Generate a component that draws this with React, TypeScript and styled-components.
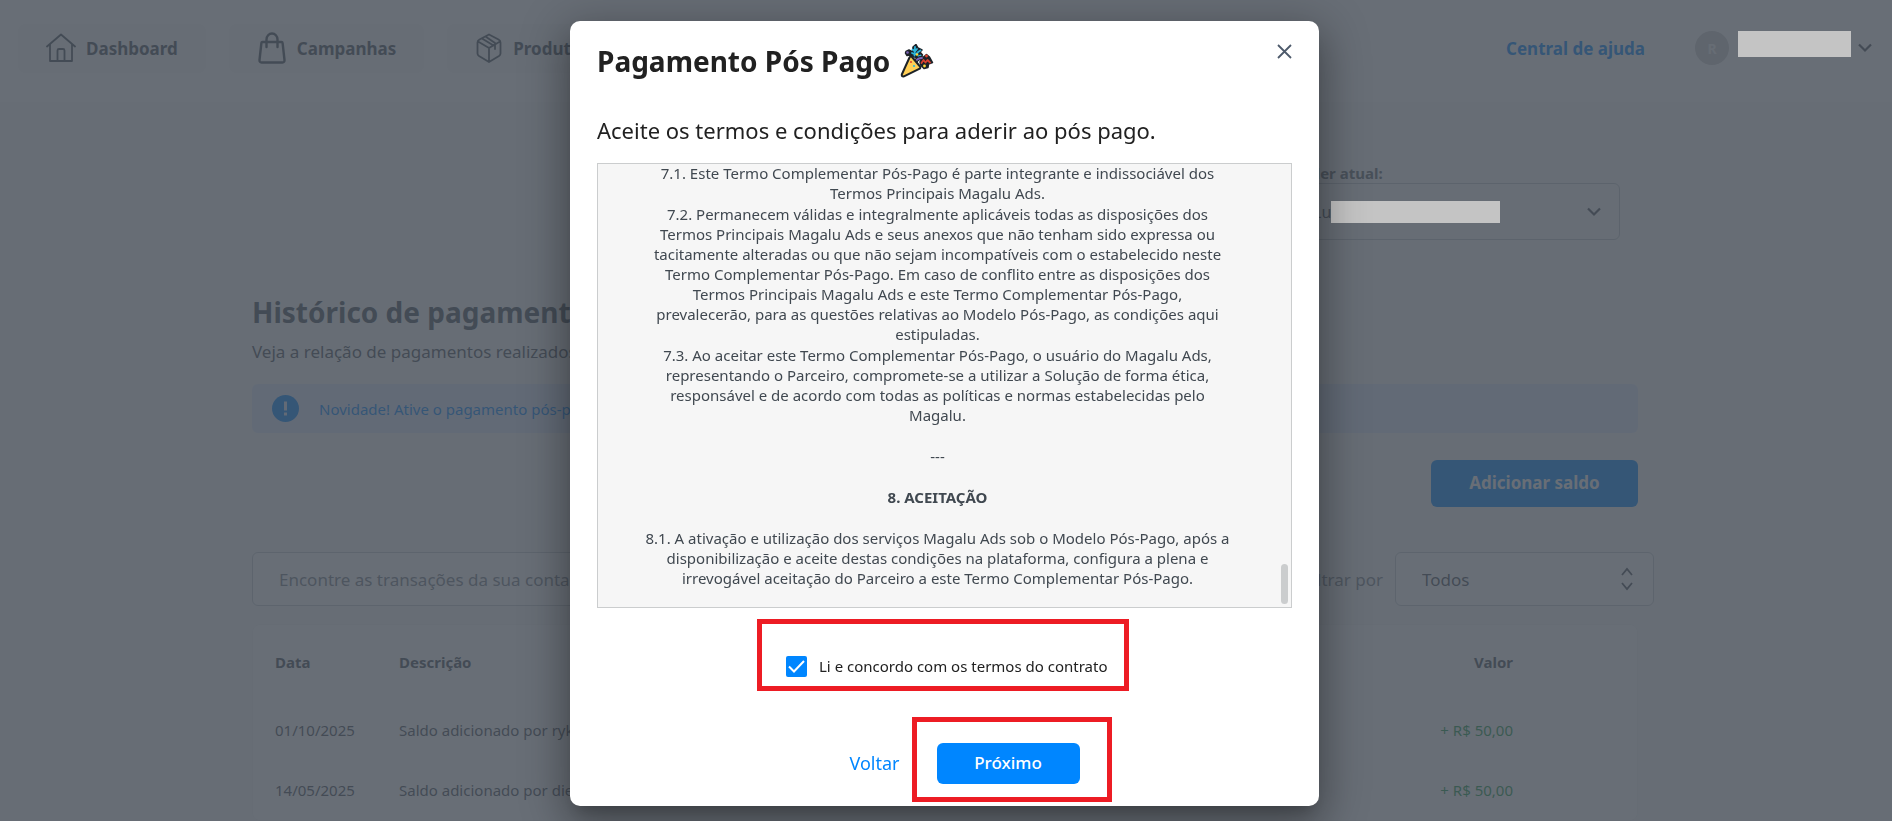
import React from "react";
import styled, { createGlobalStyle } from "styled-components";

const GlobalStyle = createGlobalStyle`
  *, *::before, *::after { box-sizing: border-box; }
  body {
    margin: 0;
    overflow: hidden;
    background: #f8fafa;
    color: #4a525c;
    font-family: "Noto Sans", "Open Sans", sans-serif;
    font-size: 16px;
  }
  button, input, select { font: inherit; color: inherit; }
  h1, h2, p { margin: 0; }
`;

/* ---------- page ---------- */

const Header = styled.header`
  display: flex;
  align-items: center;
  justify-content: space-between;
  height: 102px;
  padding: 0 20px 6px 18px;
  background: #ffffff;
`;

const Nav = styled.nav`
  display: flex;
  gap: 23px;
`;

const NavItem = styled.a`
  display: flex;
  align-items: center;
  gap: 10px;
  height: 49px;
  padding: 0 28px;
  border-radius: 8px;
  background: #f7f7f7;
  color: #49525b;
  font-size: 17px;
  font-weight: 700;
  text-decoration: none;
`;

const Account = styled.div`
  display: flex;
  align-items: center;
`;

const HelpLink = styled.a`
  margin-right: 50px;
  color: #0086ff;
  font-size: 17px;
  font-weight: 700;
  text-decoration: none;
`;

const Avatar = styled.span`
  display: flex;
  align-items: center;
  justify-content: center;
  width: 34px;
  height: 34px;
  margin-right: 9px;
  border-radius: 50%;
  background: #cfcfcf;
  color: #f8f8f8;
  font-size: 14px;
  font-weight: 700;
`;

const Redacted = styled.span<{ $width: number; $height: number }>`
  position: relative;
  z-index: 2;
  width: ${(p) => p.$width}px;
  height: ${(p) => p.$height}px;
  background: #c4c4c4;
`;

const AccountName = styled.span`
  display: flex;
  height: 34px;
  margin-right: 7px;
`;

const IconButton = styled.button`
  display: flex;
  padding: 0;
  border: 0;
  background: none;
`;

const Main = styled.main`
  padding: 61px 254px 0 252px;
`;

const SellerBlock = styled.div`
  display: flex;
  flex-direction: column;
  width: 420px;
  margin: 0 18px 0 auto;
`;

const SellerLabel = styled.span`
  padding-left: 94px;
  color: #606870;
  font-size: 15px;
  font-weight: 700;
  line-height: 20px;
`;

const SellerPicker = styled.button`
  display: flex;
  align-items: center;
  height: 57px;
  padding: 0 18px 0 112px;
  border: 1px solid #c4c8cc;
  border-radius: 6px;
  background: none;
  font-size: 16px;
  text-align: left;

  svg { margin-left: auto; }
`;

const PageTitle = styled.h1`
  margin-top: 56px;
  color: #49525b;
  font-size: 28px;
  font-weight: 700;
  line-height: 32px;
`;

const PageText = styled.p`
  margin-top: 12px;
  font-size: 17px;
  line-height: 24px;
`;

const Notice = styled.div`
  display: flex;
  align-items: center;
  gap: 20px;
  height: 49px;
  margin-top: 20px;
  padding: 0 20px;
  border-radius: 6px;
  background: #e2ebff;
  color: #0086ff;
  font-size: 15px;
`;

const PrimaryButton = styled.button<{ $large?: boolean }>`
  width: ${(p) => (p.$large ? 207 : 143)}px;
  height: ${(p) => (p.$large ? 47 : 41)}px;
  padding: 0 0 2px;
  border: 0;
  border-radius: 6px;
  background: #0086ff;
  color: #ffffff;
  font-size: 17px;
  font-weight: ${(p) => (p.$large ? 700 : 500)};
`;

const Actions = styled.div`
  display: flex;
  justify-content: flex-end;
  margin-top: 27px;
`;

const Filters = styled.div`
  display: flex;
  align-items: center;
  gap: 24px;
  margin: 45px -16px 0 0;
`;

const Search = styled.input`
  flex: 1;
  height: 54px;
  padding: 0 26px;
  border: 1px solid #c9cdd2;
  border-radius: 6px;
  background: #ffffff;
  font-size: 17px;

  &::placeholder { color: #7b828a; opacity: 1; }
`;

const FilterLabel = styled.label`
  display: flex;
  align-items: center;
  gap: 12px;
  color: #7b828a;
  font-size: 17px;
`;

const SelectBox = styled.span`
  display: grid;
  align-items: center;
  width: 259px;
  color: #4a525c;

  > * { grid-area: 1 / 1; }
  svg { justify-self: end; margin-right: 20px; pointer-events: none; }
`;

const Select = styled.select`
  appearance: none;
  width: 100%;
  height: 54px;
  padding: 0 26px;
  border: 1px solid #c9cdd2;
  border-radius: 6px;
  background: #ffffff;
`;

const Card = styled.section`
  margin-top: 18px;
  border: 1px solid #f6f6f6;
  border-radius: 8px;
  background: #ffffff;
`;

const Table = styled.table`
  width: 100%;
  border-collapse: collapse;
  font-size: 15px;
  text-align: left;
`;

const HeadCell = styled.th<{ $width?: number; $right?: boolean }>`
  height: 75px;
  width: ${(p) => (p.$width ? `${p.$width}px` : "auto")};
  padding: ${(p) => (p.$right ? "0 124px 2px 0" : "0 0 2px 22px")};
  color: #49525b;
  font-weight: 700;
  text-align: ${(p) => (p.$right ? "right" : "left")};
`;

const Cell = styled.td<{ $right?: boolean }>`
  height: 60px;
  padding: ${(p) => (p.$right ? "0 124px 0 0" : "0 0 0 22px")};
  color: ${(p) => (p.$right ? "#1c9a4c" : "inherit")};
  text-align: ${(p) => (p.$right ? "right" : "left")};
`;

/* ---------- dialog ---------- */

const Overlay = styled.div`
  position: fixed;
  inset: 0;
  z-index: 1;
  background: rgba(66, 74, 84, 0.8);
`;

const DialogLayer = styled.div`
  position: fixed;
  inset: 0;
  z-index: 3;
  display: flex;
  align-items: flex-start;
  justify-content: center;
  padding: 21px 3px 15px 0;
`;

const Dialog = styled.div`
  width: 100%;
  max-width: 749px;
  padding: 23px 27px 22px;
  border-radius: 10px;
  background: #ffffff;
  box-shadow:
    0 11px 15px -7px rgba(0, 0, 0, 0.2),
    0 24px 38px 3px rgba(0, 0, 0, 0.14),
    0 9px 46px 8px rgba(0, 0, 0, 0.24);
  color: #212121;
`;

const DialogHead = styled.div`
  display: flex;
  align-items: flex-start;
  justify-content: space-between;
`;

const DialogTitle = styled.h2`
  display: flex;
  align-items: center;
  gap: 10px;
  height: 34px;
  font-size: 28px;
  font-weight: 700;
  line-height: 34px;
`;

const DialogText = styled.p`
  margin-top: 38px;
  font-size: 22px;
  line-height: 28px;
`;

const Terms = styled.div`
  position: relative;
  height: 445px;
  margin-top: 19px;
  padding-right: 14px;
  border: 1px solid #cbcdce;
  background: #f6f6f6;
  color: #404850;
  font-size: 15px;
  line-height: 20px;
  text-align: center;
`;

const TermsBody = styled.div`
  margin-top: -1px;
`;

const Clause = styled.p`
  margin-bottom: 1px;
`;

const TermsBreak = styled.p`
  margin: 21px 0;
`;

const TermsTitle = styled(TermsBreak)`
  font-weight: 700;
`;

const ScrollThumb = styled.span`
  position: absolute;
  right: 3px;
  bottom: 3px;
  width: 7px;
  height: 40px;
  border-radius: 4px;
  background: #cbcdce;
`;

const Marked = styled.div<{ $inset: string }>`
  position: relative;
  display: flex;

  &::after {
    content: "";
    position: absolute;
    inset: ${(p) => p.$inset};
    border: 5px solid #ed1c24;
    pointer-events: none;
  }
`;

const Consent = styled.div`
  display: flex;
  justify-content: center;
  margin-top: 47px;
  padding-left: 11px;
`;

const ConsentLabel = styled.label`
  display: flex;
  align-items: center;
  gap: 12px;
  min-width: 328px;
  height: 22px;
  font-size: 15px;
  white-space: nowrap;
`;

const Tick = styled.span`
  display: grid;
  > * { grid-area: 1 / 1; }
  svg { pointer-events: none; }
`;

const Checkbox = styled.input`
  appearance: none;
  width: 21px;
  height: 21px;
  margin: 0;
  border-radius: 2px;
  background: #0086ff;
`;

const DialogActions = styled.div`
  display: flex;
  align-items: center;
  justify-content: center;
  gap: 37px;
  margin-top: 66px;
  padding-left: 40px;
`;

const BackButton = styled.button`
  padding: 0 0 2px;
  border: 0;
  background: none;
  color: #0086ff;
  font-size: 18px;
`;

/* ---------- drawings ---------- */

const stroke = {
  fill: "none",
  stroke: "currentColor",
  strokeLinecap: "round" as const,
  strokeLinejoin: "round" as const,
};

const HomeIcon = () => (
  <svg width="30" height="30" viewBox="0 0 30 30" {...stroke} strokeWidth="1.8">
    <path d="M1 13.5 15 1.5l14 12M4 11.500V28h22V11.500M11.500 28V17.500q0-1.500 1.500-1.500h4q1.500 0 1.500 1.500V28" />
  </svg>
);

const BagIcon = () => (
  <svg width="30" height="32" viewBox="-1 -1 30 32" {...stroke} strokeWidth="2.400">
    <path d="M4.500 9h19q1 0 1.100 1L26.500 27q.1 2.500-2 2.500h-21Q1.400 29.500 1.500 27L3.400 10q.1-1 1.100-1ZM8.500 14V6.500a5.500 6 0 0 1 11 0V14" />
  </svg>
);

const BoxIcon = () => (
  <svg width="28" height="30" viewBox="-1 -1 28 30" {...stroke} strokeWidth="1.800">
    <path d="M13 .5 22.500 5.500Q24.500 6.500 24.500 8.500v11q0 1.500-1.500 2.500L13 28 3 22Q1.500 21 1.500 19.500v-11q0-2 2-3ZM2 7.500 13 14l11-6.500M13 14v14M6 4.500l11.500 7M9.500 2.500 19 9v6" />
  </svg>
);

const Chevron = () => (
  <svg width="14" height="10" viewBox="0 0 14 10" {...stroke} strokeLinecap="butt" strokeLinejoin="miter" strokeWidth="2.200">
    <path d="m1 1.500 6 6 6-6" />
  </svg>
);

const Sorter = () => (
  <svg width="14" height="24" viewBox="0 0 14 24" {...stroke} strokeLinecap="butt" strokeLinejoin="miter" strokeWidth="1.800">
    <path d="m2 8 5-6 5 6M2 16l5 6 5-6" />
  </svg>
);

const AlertIcon = () => (
  <svg width="27" height="27" viewBox="0 0 27 27">
    <circle cx="13.500" cy="13.500" r="13.500" fill="#0086ff" />
    <path d="M12 6.500h3v9h-3zM12 17.500h3v3h-3z" fill="#e2ebff" />
  </svg>
);

const CloseIcon = () => (
  <svg width="15" height="15" viewBox="0 0 15 15" fill="none" stroke="#4d5a6b" strokeWidth="1.800">
    <path d="m1 1 13 13M14 1 1 14" />
  </svg>
);

const CheckMark = () => (
  <svg width="21" height="21" viewBox="0 0 21 21" fill="none" stroke="#fff" strokeWidth="2">
    <path d="m3 10.500 5 5L18 5" />
  </svg>
);

const PartyIcon = () => (
  <svg width="34" height="34" viewBox="0 0 34 34" strokeLinejoin="round" strokeLinecap="round">
    <path d="M6 7.500 9 6l3.500 2L13 3l3-2.500L18 4l4 2-2 2 2.500 3-3 3-5-1-4-2-3.500.5L5.500 9Z" fill="#1c2228" stroke="#1c2228" strokeWidth="1.500" />
    <path d="m20 18 2.500-4 4-3.500 3 2.500 3 5.500-4 1.500-.5 3.500-4 1-3-3Z" fill="#1c2228" stroke="#1c2228" strokeWidth="1.500" />
    <path d="M14.500 11.500 15 3M12.500 5.500l2.500 2 2-2.500M12 9l3 1.500 3-2M18 8l2.500-1.500M18.500 12l2-.5" fill="none" stroke="#2bb5dc" strokeWidth="1.800" />
    <path d="M15.500 17.500q2-3.500 6.500-3.500" fill="none" stroke="#1c2228" strokeWidth="4" />
    <path d="M15.500 17.500q2-3.500 6.500-3.500" fill="none" stroke="#7d63b8" strokeWidth="1.800" />
    <path d="m21.500 19 2-3 2 2.500 2-2.500 2.500 2.500" fill="none" stroke="#d8402f" strokeWidth="1.800" />
    <circle cx="7.500" cy="8.500" r="1.300" fill="#7d63b8" />
    <circle cx="17" cy="10.500" r="1.300" fill="#fcd93b" />
    <circle cx="26.500" cy="12" r="1.400" fill="#e2452f" />
    <circle cx="24.500" cy="22" r="1.400" fill="#fcd93b" />
    <path d="M9.500 13.500Q10.500 12 12 13l8 9.500q1 1.500-.8 2.300L4 32.300q-2.500.7-2.200-1.800Z" fill="#ffcf56" stroke="#1c2228" strokeWidth="2" />
    <circle cx="11" cy="18" r="1.100" fill="#e2452f" />
    <circle cx="14" cy="22" r="1.100" fill="#2bb5dc" />
  </svg>
);

/* ---------- content ---------- */

const transactions = [
  { date: "01/10/2025", text: "Saldo adicionado por ryk", value: "+ R$ 50,00" },
  { date: "14/05/2025", text: "Saldo adicionado por die", value: "+ R$ 50,00" },
];

const clauses = [
  [
    "7.1. Este Termo Complementar Pós-Pago é parte integrante e indissociável dos",
    "Termos Principais Magalu Ads.",
  ],
  [
    "7.2. Permanecem válidas e integralmente aplicáveis todas as disposições dos",
    "Termos Principais Magalu Ads e seus anexos que não tenham sido expressa ou",
    "tacitamente alteradas ou que não sejam incompatíveis com o estabelecido neste",
    "Termo Complementar Pós-Pago. Em caso de conflito entre as disposições dos",
    "Termos Principais Magalu Ads e este Termo Complementar Pós-Pago,",
    "prevalecerão, para as questões relativas ao Modelo Pós-Pago, as condições aqui",
    "estipuladas.",
  ],
  [
    "7.3. Ao aceitar este Termo Complementar Pós-Pago, o usuário do Magalu Ads,",
    "representando o Parceiro, compromete-se a utilizar a Solução de forma ética,",
    "responsável e de acordo com todas as políticas e normas estabelecidas pelo",
    "Magalu.",
  ],
];

const acceptance = [
  "8.1. A ativação e utilização dos serviços Magalu Ads sob o Modelo Pós-Pago, após a",
  "disponibilização e aceite destas condições na plataforma, configura a plena e",
  "irrevogável aceitação do Parceiro a este Termo Complementar Pós-Pago.",
];

const ClauseText = ({ lines }: { lines: string[] }) => (
  <Clause>
    {lines.map((line) => (
      <React.Fragment key={line}>
        {line}
        <br />
      </React.Fragment>
    ))}
  </Clause>
);

export default function App() {
  return (
    <>
      <GlobalStyle />
      <Header>
        <Nav>
          <NavItem href="#dashboard"><HomeIcon />Dashboard</NavItem>
          <NavItem href="#campanhas"><BagIcon />Campanhas</NavItem>
          <NavItem href="#produtos"><BoxIcon />Produtos</NavItem>
        </Nav>
        <Account>
          <HelpLink href="#ajuda">Central de ajuda</HelpLink>
          <Avatar>R</Avatar>
          <AccountName><Redacted $width={113} $height={26} /></AccountName>
          <IconButton aria-label="Abrir menu da conta"><Chevron /></IconButton>
        </Account>
      </Header>

      <Main>
        <SellerBlock>
          <SellerLabel>Seller atual:</SellerLabel>
          <SellerPicker>
            Lu
            <Redacted $width={169} $height={22} />
            <Chevron />
          </SellerPicker>
        </SellerBlock>

        <PageTitle>Histórico de pagamentos</PageTitle>
        <PageText>Veja a relação de pagamentos realizados</PageText>
        <Notice><AlertIcon />Novidade! Ative o pagamento pós-pago</Notice>
        <Actions><PrimaryButton $large>Adicionar saldo</PrimaryButton></Actions>

        <Filters>
          <Search aria-label="Buscar transações" placeholder="Encontre as transações da sua conta" />
          <FilterLabel>
            Filtrar por
            <SelectBox>
              <Select defaultValue="Todos"><option>Todos</option></Select>
              <Sorter />
            </SelectBox>
          </FilterLabel>
        </Filters>

        <Card>
          <Table>
            <thead>
              <tr>
                <HeadCell $width={124}>Data</HeadCell>
                <HeadCell>Descrição</HeadCell>
                <HeadCell $right>Valor</HeadCell>
              </tr>
            </thead>
            <tbody>
              {transactions.map((t) => (
                <tr key={t.date}>
                  <Cell>{t.date}</Cell>
                  <Cell>{t.text}</Cell>
                  <Cell $right>{t.value}</Cell>
                </tr>
              ))}
            </tbody>
          </Table>
        </Card>
      </Main>

      <Overlay />
      <DialogLayer>
        <Dialog role="dialog" aria-modal="true" aria-labelledby="dialog-title">
          <DialogHead>
            <DialogTitle id="dialog-title">Pagamento Pós Pago <PartyIcon /></DialogTitle>
            <IconButton aria-label="Fechar"><CloseIcon /></IconButton>
          </DialogHead>
          <DialogText>Aceite os termos e condições para aderir ao pós pago.</DialogText>
          <Terms>
            <TermsBody>
              {clauses.map((lines) => <ClauseText key={lines[0]} lines={lines} />)}
              <TermsBreak>---</TermsBreak>
              <TermsTitle>8. ACEITAÇÃO</TermsTitle>
              <ClauseText lines={acceptance} />
            </TermsBody>
            <ScrollThumb />
          </Terms>
          <Consent>
            <Marked $inset="-36px -15px -14px -29px">
              <ConsentLabel>
                <Tick><Checkbox type="checkbox" defaultChecked /><CheckMark /></Tick>
                Li e concordo com os termos do contrato
              </ConsentLabel>
            </Marked>
          </Consent>
          <DialogActions>
            <BackButton>Voltar</BackButton>
            <Marked $inset="-26px -32px -18px -25px">
              <PrimaryButton>Próximo</PrimaryButton>
            </Marked>
          </DialogActions>
        </Dialog>
      </DialogLayer>
    </>
  );
}
